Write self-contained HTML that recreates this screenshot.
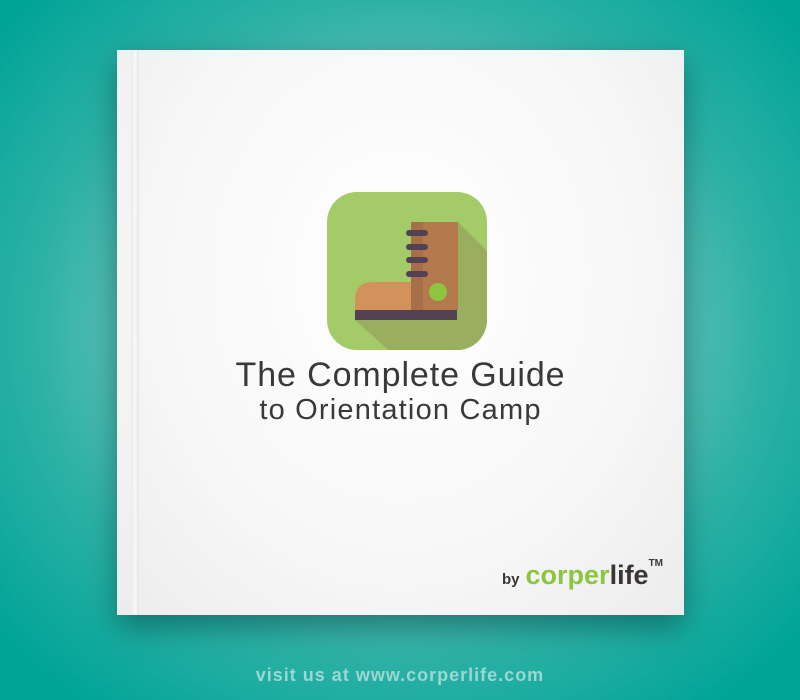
<!DOCTYPE html>
<html><head><style>
body{margin:0;width:800px;height:700px;overflow:hidden;background:radial-gradient(520px 470px at 400px 330px,#9ad5ce 0%,#6cc5bc 45%,#2db1a6 70%,#00a497 100%);font-family:"Liberation Sans",sans-serif;position:relative}
.shadow{position:absolute;left:117px;top:50px;width:567px;height:565px;box-shadow:0 12px 28px rgba(0,70,65,.55);}
.book{position:absolute;left:117px;top:50px;width:567px;height:565px;background:radial-gradient(ellipse at 50% 40%,#fff 0%,#f7f7f7 60%,#ececec 100%);}
.spine{position:absolute;left:14px;top:0;width:8px;height:100%;background:linear-gradient(90deg,#eaeaea,#f8f8f8,#e6e6e6)}
.t1{position:absolute;left:0;width:100%;text-align:center;color:#3b3838;font-size:34px;top:306px;letter-spacing:0.9px}
.t2{position:absolute;left:0;width:100%;text-align:center;color:#3b3838;font-size:29px;top:344px;letter-spacing:1.2px}
.logo{position:absolute;left:385px;top:510px;font-weight:bold;font-size:27px;color:#3a3637}
.logo small{font-size:15px;margin-right:6px}
.logo .g{color:#8cc63f}
.logo sup{font-size:10px;position:relative;top:-8px}
.visit{position:absolute;left:0;width:800px;text-align:center;top:665px;color:#9ad8d1;font-weight:bold;font-size:18px;letter-spacing:1px}
</style></head><body>
<div class="shadow"></div>
<div class="book"><div class="spine"></div>
<svg style="position:absolute;left:210px;top:142px" width="160" height="158" viewBox="327 192 160 158">
<defs><clipPath id="c"><rect x="327" y="192" width="160" height="158" rx="30"/></clipPath></defs>
<rect x="327" y="192" width="160" height="158" rx="30" fill="#a3cb67"/>
<g clip-path="url(#c)"><polygon points="458,222 500,264 500,360 400,360 355,320 457,320" fill="#9aae5f"/></g>
<path d="M355,310 V300 Q355,282 373,282 H411 V310 Z" fill="#d3925c"/>
<rect x="411" y="222" width="47" height="88" fill="#b47a4e"/>
<rect x="411" y="222" width="12" height="88" fill="#a66f47"/>
<rect x="355" y="310" width="102" height="10" fill="#534254"/>
<g fill="#534254"><rect x="406" y="230" width="22" height="6" rx="3"/><rect x="406" y="244" width="22" height="6" rx="3"/><rect x="406" y="257" width="22" height="6" rx="3"/><rect x="406" y="271" width="22" height="6" rx="3"/></g>
<circle cx="438" cy="292" r="9" fill="#8cc63f"/>
</svg>
<div class="t1">The Complete Guide</div>
<div class="t2">to Orientation Camp</div>
<div class="logo"><small>by</small><span class="g">corper</span>life<sup>TM</sup></div>
</div>
<div class="visit">visit us at www.corperlife.com</div>
</body></html>
